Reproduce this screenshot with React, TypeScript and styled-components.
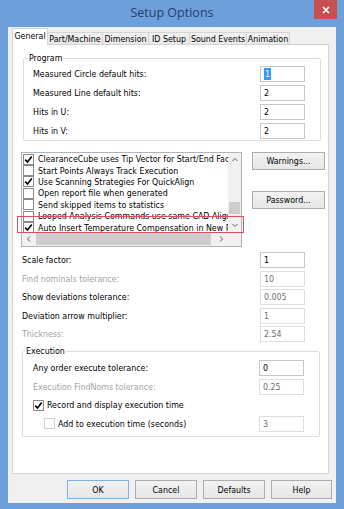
import React from "react";
import styled, { createGlobalStyle } from "styled-components";

const Global = createGlobalStyle`
  html, body { margin: 0; padding: 0; }
  body {
    width: 344px; height: 509px; overflow: hidden;
    font-family: "DejaVu Sans Condensed", "DejaVu Sans", sans-serif;
    font-stretch: condensed;
    font-size: 8.8px;
    color: #000;
  }
`;

const Window = styled.div`
  width: 344px;
  height: 509px;
  box-sizing: border-box;
  background: #6d9fdb;
  display: flex;
  flex-direction: column;
  padding: 0 8px 6px 8px;
`;

const TitleBar = styled.div`
  height: 27px;
  display: grid;
  grid-template-columns: 1fr auto 1fr;
  align-items: start;
  margin: 0 -8px;
`;

const Title = styled.div`
  grid-column: 2;
  font-family: "Open Sans", "Noto Sans", sans-serif;
  font-stretch: normal;
  font-size: 12.5px;
  line-height: 26px;
  color: #22406a;
`;

const Close = styled.div`
  grid-column: 3;
  justify-self: end;
  margin-right: 7px;
  width: 23px;
  height: 19px;
  background: #c75050;
  display: flex;
  align-items: center;
  justify-content: center;
`;

const Client = styled.div`
  flex: 1;
  background: #f0f0f0;
  display: flex;
  flex-direction: column;
  padding: 1px 4px 4px 4px;
  box-sizing: border-box;
`;

const TabRow = styled.div`
  display: flex;
  align-items: flex-end;
  height: 17px;
  position: relative;
  z-index: 1;
`;

const Tab = styled.div<{ $w: number; $active?: boolean }>`
  box-sizing: border-box;
  width: ${(p) => p.$w}px;
  height: ${(p) => (p.$active ? 17 : 13)}px;
  border: 1px solid #d4d4d4;
  border-bottom: ${(p) => (p.$active ? "none" : "1px solid #d4d4d4")};
  border-left: ${(p) => (p.$active ? "1px solid #d4d4d4" : "none")};
  background: ${(p) => (p.$active ? "#fff" : "linear-gradient(#f2f2f2, #e8e8e8)")};
  display: flex;
  align-items: center;
  justify-content: center;
  white-space: nowrap;
  padding-bottom: ${(p) => (p.$active ? 3 : 0)}px;
`;

const Panel = styled.div`
  margin: -1px 3px 0 0;
  height: 430px;
  box-sizing: border-box;
  background: #fff;
  border: 1px solid #d4d4d4;
  display: flex;
  flex-direction: column;
`;

const Group = styled.fieldset<{ $left: number; $top: number; $right: number }>`
  margin: ${(p) => p.$top}px ${(p) => p.$right}px 0 ${(p) => p.$left}px;
  padding: 0 15px 0 0;
  border: 1px solid #dcdcdc;
  border-radius: 2px;
  min-width: 0;
`;

const Legend = styled.legend<{ $inset: number }>`
  margin-left: ${(p) => p.$inset}px;
  padding: 0 1px;
  line-height: 12px;
`;

const GroupBody = styled.div<{ $pt: number; $pb: number }>`
  padding: ${(p) => p.$pt}px 0 ${(p) => p.$pb}px 0;
`;

const Row = styled.div<{ $h: number; $indent: number }>`
  height: ${(p) => p.$h}px;
  display: flex;
  align-items: center;
  padding-left: ${(p) => p.$indent}px;
`;

const Label = styled.span<{ $disabled?: boolean }>`
  color: ${(p) => (p.$disabled ? "#a3a3a3" : "#000")};
  white-space: nowrap;
`;

const Field = styled.div<{ $disabled?: boolean }>`
  margin-left: auto;
  width: 45px;
  height: 16px;
  box-sizing: border-box;
  border: 1px solid ${(p) => (p.$disabled ? "#dedede" : "#c4c6cb")};
  padding-left: 3px;
  display: flex;
  align-items: center;
  color: ${(p) => (p.$disabled ? "#707070" : "#000")};
  background: #fff;
`;

const Selected = styled.span`
  background: #3399ff;
  color: #fff;
  padding: 0 1px;
  line-height: 12px;
`;

const Middle = styled.div`
  display: flex;
  margin: 11px 0 0 8px;
  gap: 10px;
  align-items: flex-start;
`;

const ListWrap = styled.div`
  position: relative;
`;

const ListBox = styled.div`
  width: 221px;
  height: 95px;
  box-sizing: border-box;
  border: 1px solid #b0b3b9;
  display: grid;
  grid-template-columns: 1fr 13px;
  grid-template-rows: 1fr 14px;
  background: #fff;
`;

const Items = styled.div`
  overflow: hidden;
  padding-top: 0.5px;
`;

const Item = styled.div`
  height: 11.4px;
  display: flex;
  align-items: center;
  gap: 4px;
  padding-left: 1px;
  white-space: nowrap;
`;

const Box = styled.div<{ $disabled?: boolean; $size?: number }>`
  flex: none;
  width: ${(p) => p.$size ?? 11}px;
  height: ${(p) => p.$size ?? 11}px;
  box-sizing: border-box;
  border: 1px solid ${(p) => (p.$disabled ? "#cfcfcf" : "#8a8a8a")};
  background: #fff;
  display: flex;
  align-items: center;
  justify-content: center;
`;

const VScroll = styled.div`
  grid-row: 1;
  grid-column: 2;
  background: #f0f0f0;
  display: flex;
  flex-direction: column;
`;

const HScroll = styled.div`
  grid-row: 2;
  grid-column: 1;
  background: #f0f0f0;
  display: flex;
  align-items: stretch;
`;

const Corner = styled.div`
  grid-row: 2;
  grid-column: 2;
  background: #f0f0f0;
`;

const Arrow = styled.div<{ $len: number; $vertical?: boolean }>`
  flex: none;
  ${(p) => (p.$vertical ? `height: ${p.$len}px;` : `width: ${p.$len}px;`)}
  display: flex;
  align-items: center;
  justify-content: center;
`;

const Track = styled.div<{ $len: number; $vertical?: boolean }>`
  flex: none;
  ${(p) => (p.$vertical ? `height: ${p.$len}px;` : `width: ${p.$len}px;`)}
`;

const Thumb = styled.div<{ $len: number; $vertical?: boolean }>`
  flex: none;
  background: #cdcdcd;
  ${(p) => (p.$vertical ? `height: ${p.$len}px; margin: 0 1px;` : `width: ${p.$len}px; margin: 1px 0;`)}
`;

const Highlight = styled.div`
  position: absolute;
  left: -4px;
  top: 64px;
  width: 227px;
  height: 17px;
  box-sizing: border-box;
  border: 1.5px solid #dc4e5a;
  pointer-events: none;
`;

const SideButtons = styled.div`
  display: flex;
  flex-direction: column;
  gap: 21px;
`;

const Button = styled.div<{ $w: number; $default?: boolean }>`
  width: ${(p) => p.$w}px;
  height: 18px;
  box-sizing: border-box;
  border: 1px solid ${(p) => (p.$default ? "#7db2e8" : "#adadad")};
  background: linear-gradient(#f2f2f2, #e6e6e6);
  display: flex;
  align-items: center;
  justify-content: center;
`;

const Rows = styled.div`
  margin: 4px 23px 0 0;
`;

const Footer = styled.div`
  display: flex;
  justify-content: flex-end;
  gap: 6px;
  margin-top: 6px;
  height: 19px;
`;

const FooterButton = styled(Button)`
  height: 19px;
`;

const Check = () => (
  <svg width="9" height="9" viewBox="0 0 9 9">
    <path d="M1.2 4.6 L3.5 7 L7.8 1.6" fill="none" stroke="#000" strokeWidth="1.6" />
  </svg>
);

const Chevron = ({ dir }: { dir: "up" | "down" | "left" | "right" }) => {
  const d = {
    up: "M1.5 5 L4 2.5 L6.5 5",
    down: "M1.5 3 L4 5.5 L6.5 3",
    left: "M5 1.5 L2.5 4 L5 6.5",
    right: "M3 1.5 L5.5 4 L3 6.5",
  }[dir];
  return (
    <svg width="8" height="8" viewBox="0 0 8 8">
      <path d={d} fill="none" stroke="#606060" strokeWidth="1" />
    </svg>
  );
};

const tabs = [
  { name: "General", w: 36, active: true },
  { name: "Part/Machine", w: 55 },
  { name: "Dimension", w: 46 },
  { name: "ID Setup", w: 41 },
  { name: "Sound Events", w: 57 },
  { name: "Animation", w: 43 },
];

const listItems = [
  { text: "ClearanceCube uses Tip Vector for Start/End Faces", on: true },
  { text: "Start Points Always Track Execution", on: false },
  { text: "Use Scanning Strategies For QuickAlign", on: true },
  { text: "Open report file when generated", on: false },
  { text: "Send skipped items to statistics", on: false },
  { text: "Looped Analysis Commands use same CAD Alignment", on: false },
  { text: "Auto Insert Temperature Compensation in New Programs", on: true },
];

const tolRows = [
  { label: "Scale factor:", value: "1" },
  { label: "Find nominals tolerance:", value: "10", dl: true, dv: true },
  { label: "Show deviations tolerance:", value: "0.005", dv: true },
  { label: "Deviation arrow multiplier:", value: "1", dv: true },
  { label: "Thickness:", value: "2.54", dl: true, dv: true },
];

export default function App() {
  return (
    <>
      <Global />
      <Window>
        <TitleBar>
          <Title>Setup Options</Title>
          <Close>
            <svg width="8" height="8" viewBox="0 0 8 8">
              <path d="M1 1 L7 7 M7 1 L1 7" stroke="#fff" strokeWidth="1.6" />
            </svg>
          </Close>
        </TitleBar>
        <Client>
          <TabRow>
            {tabs.map((t) => (
              <Tab key={t.name} $w={t.w} $active={t.active}>
                {t.name}
              </Tab>
            ))}
          </TabRow>
          <Panel>
            <Group $left={10} $top={7} $right={7}>
              <Legend $inset={4}>Program</Legend>
              <GroupBody $pt={0} $pb={0}>
                <Row $h={19} $indent={9}>
                  <Label>Measured Circle default hits:</Label>
                  <Field>
                    <Selected>1</Selected>
                  </Field>
                </Row>
                <Row $h={19} $indent={9}>
                  <Label>Measured Line default hits:</Label>
                  <Field>2</Field>
                </Row>
                <Row $h={19} $indent={9}>
                  <Label>Hits in U:</Label>
                  <Field>2</Field>
                </Row>
                <Row $h={19} $indent={9}>
                  <Label>Hits in V:</Label>
                  <Field>2</Field>
                </Row>
              </GroupBody>
            </Group>
            <Middle>
              <ListWrap>
                <ListBox>
                  <Items>
                    {listItems.map((it) => (
                      <Item key={it.text}>
                        <Box>{it.on && <Check />}</Box>
                        <span>{it.text}</span>
                      </Item>
                    ))}
                  </Items>
                  <VScroll>
                    <Arrow $vertical $len={13}>
                      <Chevron dir="up" />
                    </Arrow>
                    <Track $vertical $len={36} />
                    <Thumb $vertical $len={12} />
                    <Track $vertical $len={3} />
                    <Arrow $vertical $len={15}>
                      <Chevron dir="down" />
                    </Arrow>
                  </VScroll>
                  <HScroll>
                    <Arrow $len={14}>
                      <Chevron dir="left" />
                    </Arrow>
                    <Thumb $len={175} />
                    <Track $len={3} />
                    <Arrow $len={14}>
                      <Chevron dir="right" />
                    </Arrow>
                  </HScroll>
                  <Corner />
                </ListBox>
                <Highlight />
              </ListWrap>
              <SideButtons>
                <Button $w={73}>Warnings...</Button>
                <Button $w={73}>Password...</Button>
              </SideButtons>
            </Middle>
            <Rows>
              {tolRows.map((r) => (
                <Row key={r.label} $h={18.5} $indent={9}>
                  <Label $disabled={r.dl}>{r.label}</Label>
                  <Field $disabled={r.dv}>{r.value}</Field>
                </Row>
              ))}
            </Rows>
            <Group $left={9} $top={1.5} $right={8}>
              <Legend $inset={2}>Execution</Legend>
              <GroupBody $pt={2} $pb={3}>
                <Row $h={18.5} $indent={10}>
                  <Label>Any order execute tolerance:</Label>
                  <Field>0</Field>
                </Row>
                <Row $h={18.5} $indent={10}>
                  <Label $disabled>Execution FindNoms tolerance:</Label>
                  <Field $disabled>0.25</Field>
                </Row>
                <Row $h={18.5} $indent={10}>
                  <Box $size={11}>
                    <Check />
                  </Box>
                  <Label style={{ marginLeft: 3 }}>Record and display execution time</Label>
                </Row>
                <Row $h={18.5} $indent={21}>
                  <Box $size={11} $disabled />
                  <Label style={{ marginLeft: 3 }}>Add to execution time (seconds)</Label>
                  <Field $disabled>3</Field>
                </Row>
              </GroupBody>
            </Group>
          </Panel>
          <Footer>
            <FooterButton $w={62} $default>OK</FooterButton>
            <FooterButton $w={62}>Cancel</FooterButton>
            <FooterButton $w={62}>Defaults</FooterButton>
            <FooterButton $w={61}>Help</FooterButton>
          </Footer>
        </Client>
      </Window>
    </>
  );
}
